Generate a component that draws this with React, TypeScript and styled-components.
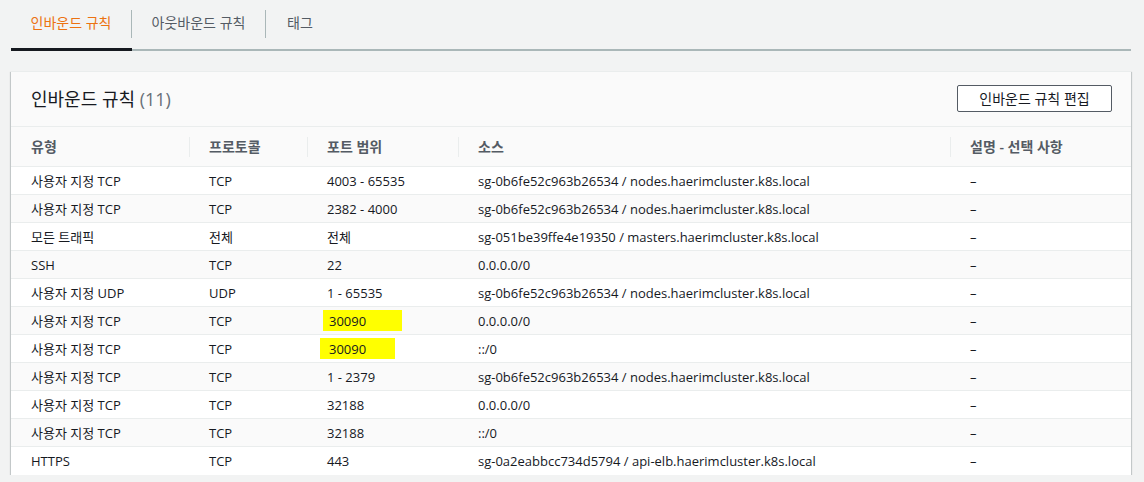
import React from "react";
import styled, { createGlobalStyle } from "styled-components";

const Global = createGlobalStyle`
  html, body { margin: 0; padding: 0; background: #f2f3f3; }
  body { font-family: "Open Sans", "Noto Sans CJK KR", sans-serif; color: #16191f; font-size: 14px; }
`;

const Page = styled.div`
  padding: 0 13px 0 11px;
  width: 1144px;
  box-sizing: border-box;
`;

const Tabs = styled.div`
  display: flex;
  height: 49px;
  border-bottom: 2px solid #aab7b8;
  margin-bottom: 20px;
`;

const Tab = styled.div<{ $active?: boolean; $w: number; $last?: boolean }>`
  position: relative;
  width: ${(p) => p.$w}px;
  display: flex;
  align-items: center;
  justify-content: center;
  padding-bottom: 4px;
  box-sizing: border-box;
  font-size: 14px;
  color: ${(p) => (p.$active ? "#ec7211" : "#545b64")};
  border-right: ${(p) => (p.$last ? "none" : "1px solid #aab7b8")};
  margin: 10px 0 11px;
  height: 28px;
  &::after {
    content: "";
    display: ${(p) => (p.$active ? "block" : "none")};
    position: absolute;
    left: 0;
    right: -1px;
    bottom: -13px;
    height: 3px;
    background: #16191f;
  }
`;

const Panel = styled.div`
  background: #fff;
  box-shadow: 0 1px 1px 0 rgba(0, 28, 36, 0.3), 1px 1px 1px 0 rgba(0, 28, 36, 0.15), -1px 1px 1px 0 rgba(0, 28, 36, 0.15);
  border-top: 1px solid #eaeded;
`;

const Header = styled.div`
  display: flex;
  align-items: center;
  justify-content: space-between;
  height: 55px;
  padding: 0 19px 2px 20px;
  box-sizing: border-box;
  background: #fafafa;
  border-bottom: 1px solid #eaeded;
`;

const Title = styled.h2`
  margin: 0;
  font-size: 18px;
  font-weight: 400;
  color: #16191f;
  span { color: #687078; }
`;

const Button = styled.button`
  font-family: inherit;
  font-size: 14px;
  background: #fff;
  color: #16191f;
  border: 1px solid #545b64;
  border-radius: 2px;
  width: 155px;
  height: 27px;
  padding: 0;
`;

const Table = styled.div`
  display: grid;
  grid-template-columns: 178px 118px 151px 492px 1fr;
`;

const HeadCell = styled.div<{ $sep?: boolean }>`
  height: 40px;
  display: flex;
  align-items: center;
  padding-left: 20px;
  padding-bottom: 1px;
  box-sizing: border-box;
  font-weight: 600;
  color: #545b64;
  background: #fafafa;
  border-bottom: 1px solid #eaeded;
  position: relative;
  &::before {
    content: "";
    display: ${(p) => (p.$sep ? "block" : "none")};
    position: absolute;
    left: 0;
    top: 10px;
    height: 20px;
    width: 1px;
    background: #eaeded;
  }
`;

const Cell = styled.div<{ $alt: boolean; $last: boolean }>`
  display: flex;
  align-items: center;
  padding-left: 20px;
  font-size: 13px;
  color: #16191f;
  background: ${(p) => (p.$alt ? "#fafafa" : "#fff")};
  border-bottom: ${(p) => (p.$last ? "none" : "1px solid #eaeded")};
  white-space: nowrap;
  height: ${(p) => (p.$last ? 28 : 27)}px;
`;

const Mark = styled.span<{ $dx: number; $w: number }>`
  background: #ffff00;
  margin-left: ${(p) => p.$dx}px;
  width: ${(p) => p.$w}px;
  height: 21px;
  display: inline-flex;
  align-items: center;
  padding-left: ${(p) => -p.$dx + 2}px;
  box-sizing: border-box;
`;

type Row = [string, string, string, string, number?];

const rows: Row[] = [
  ["사용자 지정 TCP", "TCP", "4003 - 65535", "sg-0b6fe52c963b26534 / nodes.haerimcluster.k8s.local"],
  ["사용자 지정 TCP", "TCP", "2382 - 4000", "sg-0b6fe52c963b26534 / nodes.haerimcluster.k8s.local"],
  ["모든 트래픽", "전체", "전체", "sg-051be39ffe4e19350 / masters.haerimcluster.k8s.local"],
  ["SSH", "TCP", "22", "0.0.0.0/0"],
  ["사용자 지정 UDP", "UDP", "1 - 65535", "sg-0b6fe52c963b26534 / nodes.haerimcluster.k8s.local"],
  ["사용자 지정 TCP", "TCP", "30090", "0.0.0.0/0", 1],
  ["사용자 지정 TCP", "TCP", "30090", "::/0", 2],
  ["사용자 지정 TCP", "TCP", "1 - 2379", "sg-0b6fe52c963b26534 / nodes.haerimcluster.k8s.local"],
  ["사용자 지정 TCP", "TCP", "32188", "0.0.0.0/0"],
  ["사용자 지정 TCP", "TCP", "32188", "::/0"],
  ["HTTPS", "TCP", "443", "sg-0a2eabbcc734d5794 / api-elb.haerimcluster.k8s.local"],
];

const heads = ["유형", "프로토콜", "포트 범위", "소스", "설명 - 선택 사항"];

export default function App() {
  return (
    <Page>
      <Global />
      <Tabs>
        <Tab $active $w={121}>인바운드 규칙</Tab>
        <Tab $w={134}>아웃바운드 규칙</Tab>
        <Tab $w={68} $last>태그</Tab>
      </Tabs>
      <Panel>
        <Header>
          <Title>
            인바운드 규칙 <span>(11)</span>
          </Title>
          <Button>인바운드 규칙 편집</Button>
        </Header>
        <Table>
          {heads.map((h, i) => (
            <HeadCell key={h} $sep={i > 0}>
              {h}
            </HeadCell>
          ))}
          {rows.map((r, i) => {
            const alt = i % 2 === 1;
            const last = i === rows.length - 1;
            const hl = r[4];
            return (
              <React.Fragment key={i}>
                <Cell $alt={alt} $last={last}>{r[0]}</Cell>
                <Cell $alt={alt} $last={last}>{r[1]}</Cell>
                <Cell $alt={alt} $last={last}>
                  {hl === 1 ? (
                    <Mark $dx={-4} $w={79}>{r[2]}</Mark>
                  ) : hl === 2 ? (
                    <Mark $dx={-7} $w={75}>{r[2]}</Mark>
                  ) : (
                    r[2]
                  )}
                </Cell>
                <Cell $alt={alt} $last={last}>{r[3]}</Cell>
                <Cell $alt={alt} $last={last}>–</Cell>
              </React.Fragment>
            );
          })}
        </Table>
      </Panel>
    </Page>
  );
}
